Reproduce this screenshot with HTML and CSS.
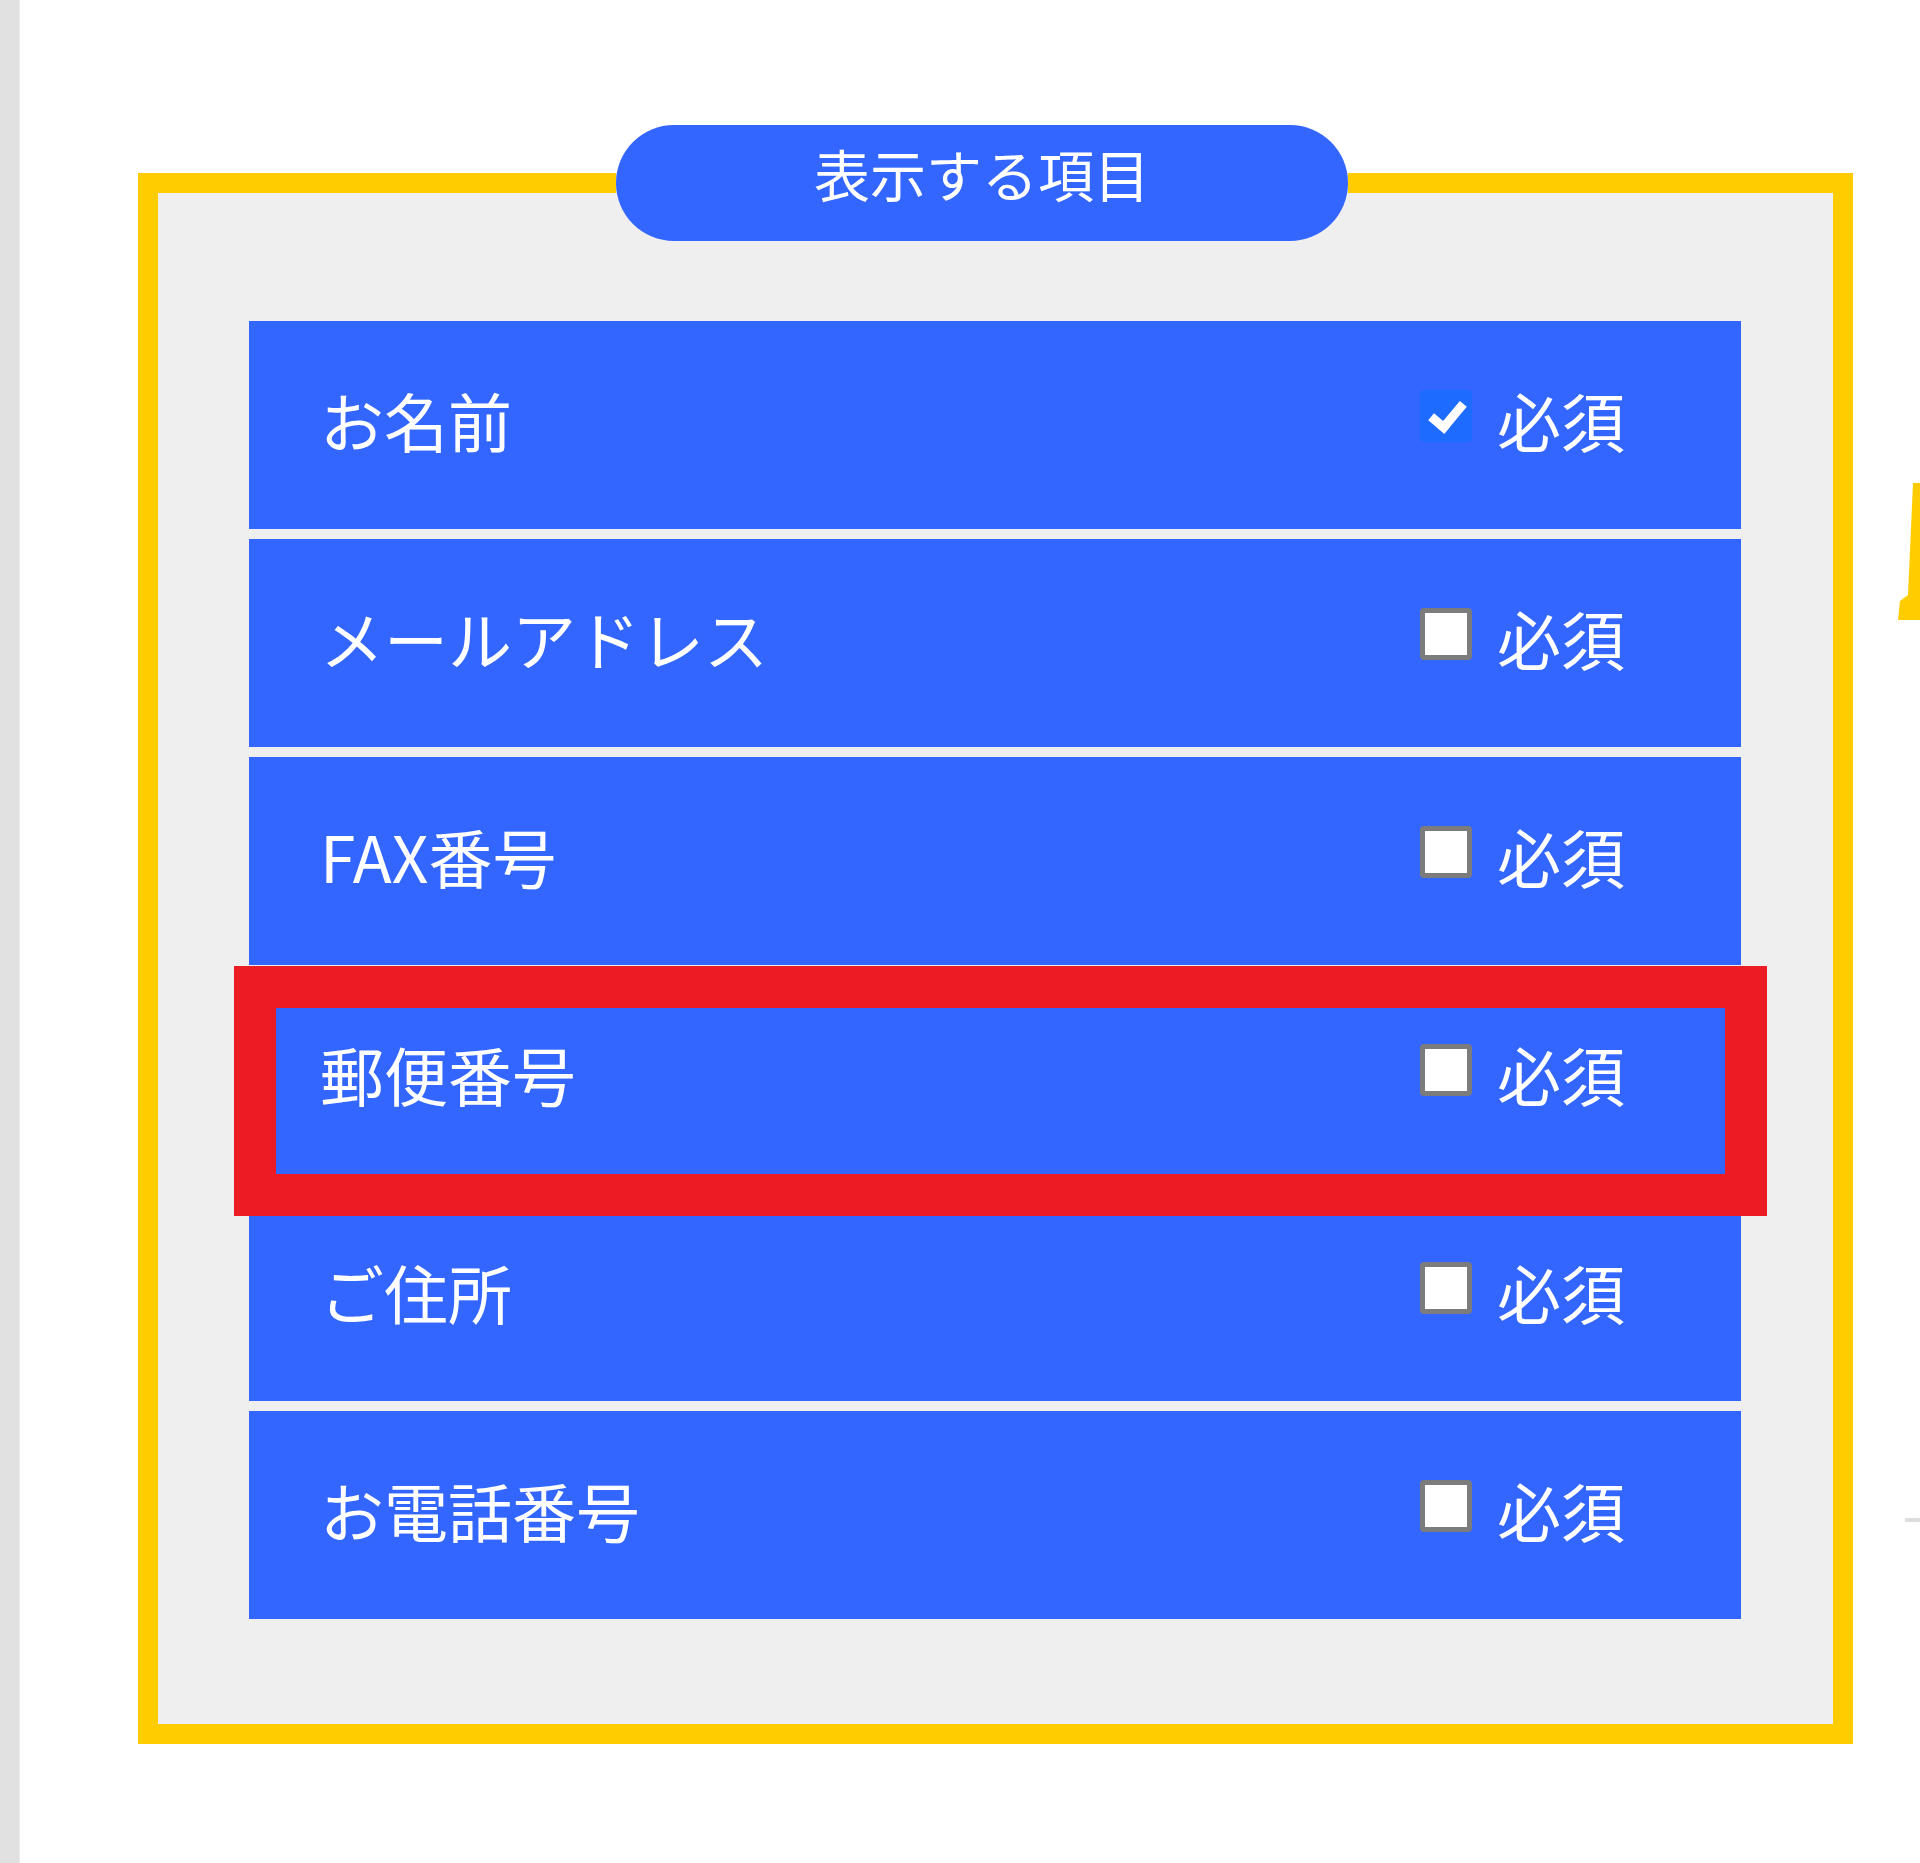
FILE: index.html
```html
<!DOCTYPE html>
<html lang="ja">
<head>
	<title>表示する項目</title>
	<meta charset="utf-8" />
	<link rel="stylesheet" href="styles.css">
</head>
<body>
	<div class="page">
		<div class="sidebar"></div>
		<main class="main">
			<fieldset class="panel">
				<legend class="panel-title"><span>表示する項目</span></legend>
				<div class="rows">
					<div class="row">
						<span class="label">お名前</span>
						<label class="required"><input type="checkbox" checked /><span>必須</span></label>
					</div>
					<div class="row">
						<span class="label">メールアドレス</span>
						<label class="required"><input type="checkbox" /><span>必須</span></label>
					</div>
					<div class="row">
						<span class="label">FAX番号</span>
						<label class="required"><input type="checkbox" /><span>必須</span></label>
					</div>
					<div class="row highlight">
						<span class="label">郵便番号</span>
						<label class="required"><input type="checkbox" /><span>必須</span></label>
					</div>
					<div class="row">
						<span class="label">ご住所</span>
						<label class="required"><input type="checkbox" /><span>必須</span></label>
					</div>
					<div class="row">
						<span class="label">お電話番号</span>
						<label class="required"><input type="checkbox" /><span>必須</span></label>
					</div>
				</div>
			</fieldset>
		</main>
		<!-- cut-off shapes at the right edge -->
		<svg class="edge-mark" width="24" height="150" viewBox="0 0 24 150">
			<polygon points="17,0 24,0 24,137 2,137 4,118 12,112" fill="#ffcc00" />
		</svg>
		<div class="edge-dash"></div>
	</div>
</body>
</html>
```

FILE: styles.css
```css
body {
	margin: 0;
	background-color: #ffffff;
	font-family: "Noto Sans CJK JP", "Noto Sans", sans-serif;
	color: #ffffff;
}

.page {
	display: flex;
	min-height: 1863px;
	position: relative;
}

.sidebar {
	width: 19px;
	background-color: #e1e1e1;
	border-right: 1px solid #ececec;
}

.main {
	padding: 125px 0 0 118px;
}

.panel {
	width: 1715px;
	margin: 0;
	padding: 80px 92px 105px 91px;
	border: 20px solid #ffcc00;
	background-color: #efefef;
	box-sizing: border-box;
}

	.panel-title {
		width: 732px;
		height: 116px;
		margin-left: 367px;
		padding: 0;
		border-radius: 58px;
		background-color: #3366ff;
		font-size: 56px;
		line-height: 96px;
	}

		.panel-title span {
			display: block;
			text-align: center;
		}

.rows {
	display: flex;
	flex-direction: column;
	gap: 10px;
}

.row {
	height: 208px;
	display: flex;
	align-items: center;
	justify-content: space-between;
	padding: 0 116px 12px 71px;
	box-sizing: border-box;
	background-color: #3366ff;
	font-size: 64px;
	position: relative;
}

	.row.highlight::after {
		content: "";
		position: absolute;
		top: -9px;
		right: -26px;
		bottom: -33px;
		left: -15px;
		border: 42px solid #ec1c24;
		z-index: 1;
	}

.required {
	display: flex;
	align-items: center;
	gap: 25px;
}

	.required input {
		appearance: none;
		width: 52px;
		height: 52px;
		margin: 0 0 6px 0;
		border: 5px solid #7c7c7c;
		border-radius: 4px;
		background-color: #ffffff;
		position: relative;
	}

	.required input:checked {
		border: none;
		background-color: #1d6cff;
	}

		.required input:checked::after {
			content: "";
			position: absolute;
			left: 17px;
			top: 6px;
			width: 12px;
			height: 26px;
			border-right: 9px solid #ffffff;
			border-bottom: 9px solid #ffffff;
			transform: rotate(40deg);
		}

.edge-mark {
	position: absolute;
	left: 1896px;
	top: 483px;
}

.edge-dash {
	position: absolute;
	left: 1905px;
	top: 1518px;
	width: 15px;
	height: 4px;
	background-color: #dddddd;
}
```
